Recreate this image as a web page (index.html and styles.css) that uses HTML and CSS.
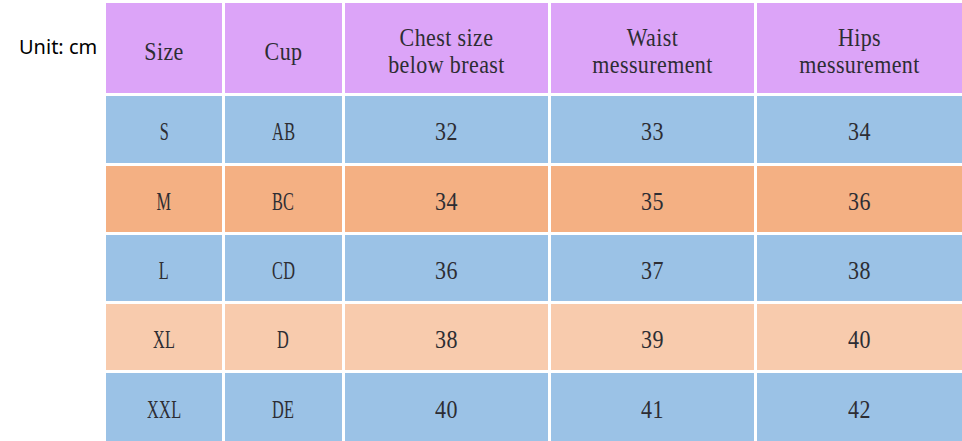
FILE: index.html
```html
<!DOCTYPE html>
<html lang="en">
<head>
<meta charset="utf-8">
<title>Size chart</title>
<link rel="stylesheet" href="styles.css">
</head>
<body>
<div class="page">
  <div class="unit">Unit: cm</div>
  <div class="chart">
    <div class="cell head"><span class="t">Size</span></div>
    <div class="cell head"><span class="t">Cup</span></div>
    <div class="cell head"><span class="t">Chest size<br>below breast</span></div>
    <div class="cell head"><span class="t">Waist<br>messurement</span></div>
    <div class="cell head"><span class="t">Hips<br>messurement</span></div>

    <div class="cell blue"><span class="t caps">S</span></div>
    <div class="cell blue"><span class="t caps">AB</span></div>
    <div class="cell blue"><span class="t">32</span></div>
    <div class="cell blue"><span class="t">33</span></div>
    <div class="cell blue"><span class="t">34</span></div>

    <div class="cell orange"><span class="t caps">M</span></div>
    <div class="cell orange"><span class="t caps">BC</span></div>
    <div class="cell orange"><span class="t">34</span></div>
    <div class="cell orange"><span class="t">35</span></div>
    <div class="cell orange"><span class="t">36</span></div>

    <div class="cell blue"><span class="t caps">L</span></div>
    <div class="cell blue"><span class="t caps">CD</span></div>
    <div class="cell blue"><span class="t">36</span></div>
    <div class="cell blue"><span class="t">37</span></div>
    <div class="cell blue"><span class="t">38</span></div>

    <div class="cell peach"><span class="t caps">XL</span></div>
    <div class="cell peach"><span class="t caps">D</span></div>
    <div class="cell peach"><span class="t">38</span></div>
    <div class="cell peach"><span class="t">39</span></div>
    <div class="cell peach"><span class="t">40</span></div>

    <div class="cell blue"><span class="t caps">XXL</span></div>
    <div class="cell blue"><span class="t caps">DE</span></div>
    <div class="cell blue"><span class="t">40</span></div>
    <div class="cell blue"><span class="t">41</span></div>
    <div class="cell blue"><span class="t">42</span></div>
  </div>
</div>
</body>
</html>
```
FILE: styles.css
```css
* { box-sizing: border-box; }

html, body {
  margin: 0;
  padding: 0;
  background: #ffffff;
}

.page {
  display: flex;
  align-items: flex-start;
  padding-top: 3px;
  width: 962px;
  height: 441px;
  overflow: hidden;
}

.unit {
  width: 106px;
  flex: none;
  height: 86px;
  padding-left: 19px;
  display: flex;
  align-items: center;
  font-family: "Noto Sans", "Open Sans", sans-serif;
  font-size: 20px;
  color: #000;
  white-space: nowrap;
}

.chart {
  flex: 1;
  display: grid;
  grid-template-columns: 116px 117px 203px 203px 1fr;
  grid-template-rows: 90px 67px 66px 66px 66px 68px;
  column-gap: 3px;
  row-gap: 3px;
}

.cell {
  display: flex;
  align-items: center;
  justify-content: center;
  text-align: center;
  font-family: "Liberation Serif", "Times New Roman", serif;
  font-size: 22px;
  letter-spacing: 0.4px;
  color: #2d2d33;
  padding-top: 5px;
}

.t {
  display: inline-block;
  transform: scaleY(1.1);
  line-height: 22px;
}

.t.caps {
  transform: scale(0.74, 1.1);
}

.head {
  background: #dca4f8;
  padding-top: 7px;
}

.head .t {
  line-height: 24px;
}

.blue { background: #9bc2e6; }
.orange { background: #f4b083; }
.peach { background: #f8cbad; }
```
